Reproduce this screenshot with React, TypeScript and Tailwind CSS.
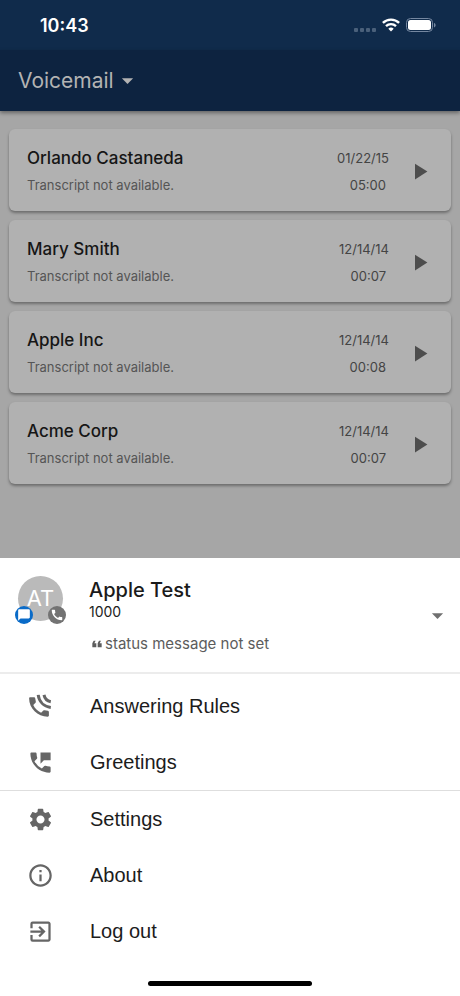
import type { ReactNode } from "react";
import {
  MdArrowDropDown,
  MdCall,
  MdChatBubble,
  MdExitToApp,
  MdFormatQuote,
  MdInfoOutline,
  MdPermPhoneMsg,
  MdPlayArrow,
  MdSettings,
} from "react-icons/md";

type Voicemail = {
  name: string;
  date: string;
  duration: string;
};

const voicemails: Voicemail[] = [
  { name: "Orlando Castaneda", date: "01/22/15", duration: "05:00" },
  { name: "Mary Smith", date: "12/14/14", duration: "00:07" },
  { name: "Apple Inc", date: "12/14/14", duration: "00:08" },
  { name: "Acme Corp", date: "12/14/14", duration: "00:07" },
];

// handset with two waves in the top right corner
function AnsweringRulesIcon() {
  return (
    <svg viewBox="0 0 27 27" className="size-[27px]" fill="none" aria-hidden="true">
      <path
        fill="currentColor"
        d="M3.2 4.2H7c.6 0 1.100.5 1.200 1.100l.6 3.200c.1.500 0 .9-.3 1.200L6.300 12c1.500 3.300 4.400 6.200 7.800 7.700l2.300-2.200c.3-.3.7-.4 1.200-.3l3.200.6c.6.1 1.100.6 1.100 1.200v3.600c0 .6-.5 1.100-1.200 1.100C10.600 23.700 2.100 15.400 2.100 5.300c0-.6.5-1.100 1.100-1.100z"
      />
      <path
        stroke="currentColor"
        strokeWidth="3"
        d="M11.200 1.900c.8 6.600 5.500 11.600 12.600 12.500M17 1.900c.7 3.600 3.200 6.100 6.800 6.800"
      />
    </svg>
  );
}

function StatusBar() {
  return (
    <div className="flex h-[50px] items-center justify-between bg-[#102b4b] pl-10 pr-6 text-white">
      <span className="pt-0.5 text-lg font-semibold">10:43</span>
      <div className="flex items-center gap-1.5">
        <div className="flex gap-0.5 pt-2.5">
          {[0, 1, 2, 3].map((i) => (
            <span key={i} className="size-1 rounded-[1px] bg-[#4a607a]" />
          ))}
        </div>
        <svg viewBox="0 0 18 14" className="h-3.5 w-[18px]" aria-label="Wi-Fi">
          <g fill="none" stroke="currentColor" strokeWidth="2.4">
            <path d="M.9 4.9a11.6 11.6 0 0 1 16.2 0" />
            <path d="M4 8.1a7.2 7.2 0 0 1 10 0" />
          </g>
          <path fill="currentColor" d="M9 13.6 6.3 10.8a4 4 0 0 1 5.4 0z" />
        </svg>
        <svg viewBox="0 0 30 14" className="h-3.5 w-[30px]" aria-label="Battery">
          <rect x=".5" y=".5" width="26" height="13" rx="4" fill="none" stroke="#7587a0" />
          <rect x="2" y="2" width="23" height="10" rx="2.5" fill="currentColor" />
          <path d="M28 5v4.4c1-.4 1.6-1.200 1.600-2.200S29 5.400 28 5z" fill="#7587a0" />
        </svg>
      </div>
    </div>
  );
}

function VoicemailCard({ name, date, duration }: Voicemail) {
  return (
    <li className="flex h-[82px] items-center rounded-md bg-[#b1b1b1] px-[18px] pt-0.5 shadow-[0_2px_3px_rgba(0,0,0,0.35)]">
      <div className="flex-1">
        <h2 className="text-[17px] leading-7 font-medium text-[#161616]">{name}</h2>
        <p className="text-[13px] leading-[26px] text-[#555]">Transcript not available.</p>
      </div>
      <div className="mr-[17px] text-right text-[#444]">
        <p className="text-[13px] leading-7">{date}</p>
        <p className="pr-[3px] text-[13px] leading-[26px]">{duration}</p>
      </div>
      <button type="button" aria-label={`Play message from ${name}`} className="text-[#4d4d4d]">
        <MdPlayArrow className="size-[27px]" />
      </button>
    </li>
  );
}

function MenuItem({ icon, label }: { icon: ReactNode; label: string }) {
  return (
    <li>
      <button
        type="button"
        className="flex h-14 w-full items-center gap-9 pl-[27px] text-left text-[#666]"
      >
        {icon}
        <span className="font-['Liberation_Sans',sans-serif] text-xl text-[#1c1c1c]">{label}</span>
      </button>
    </li>
  );
}

function Profile() {
  return (
    <div className="flex px-[18px] pt-[18px] pb-[18px]">
      <div className="relative size-[45px] shrink-0">
        <div className="flex size-full items-center justify-center rounded-full bg-[#bababa] text-[22px] text-white">
          AT
        </div>
        <span className="absolute -bottom-[3px] -left-[3px] flex size-[18px] items-center justify-center rounded-full bg-[#0a6bc8] text-white">
          <MdChatBubble className="size-3.5" />
        </span>
        <span className="absolute -right-[3px] -bottom-[3px] flex size-[18px] items-center justify-center rounded-full bg-[#737373] text-white">
          <MdCall className="size-3.5" />
        </span>
      </div>
      <div className="ml-[26px] flex-1">
        <h2 className="text-xl leading-7 font-medium text-[#1a1a1a]">Apple Test</h2>
        <p className="text-sm leading-4 text-[#222]">1000</p>
        <p className="mt-3.5 flex items-center text-[15px] leading-5 text-[#5c5c5c]">
          <MdFormatQuote className="size-4 rotate-180" />
          status message not set
        </p>
      </div>
      <button type="button" aria-label="Switch account" className="-mr-[9px] self-center text-[#707070]">
        <MdArrowDropDown className="size-[27px]" />
      </button>
    </div>
  );
}

export default function App() {
  return (
    <div className="flex min-h-screen flex-col bg-[#a6a6a6] font-[Inter,sans-serif]">
      <StatusBar />
      <header className="flex h-[61px] items-center bg-[#0d2340] pl-[18px] text-[#b3b3b3] shadow-[0_2px_4px_rgba(0,0,0,0.4)]">
        <button type="button" className="flex items-center text-[21px]">
          Voicemail
          <MdArrowDropDown className="size-[27px]" />
        </button>
      </header>

      <main className="flex-1 px-[9px] pt-[18px]">
        <ul className="flex flex-col gap-[9px]">
          {voicemails.map((vm) => (
            <VoicemailCard key={vm.name} {...vm} />
          ))}
        </ul>
      </main>

      <section aria-label="Account menu" className="bg-white">
        <Profile />
        <ul className="border-t-2 border-[#ececec] pt-1">
          <MenuItem icon={<AnsweringRulesIcon />} label="Answering Rules" />
          <MenuItem icon={<MdPermPhoneMsg className="size-[27px]" />} label="Greetings" />
        </ul>
        <ul className="border-t border-[#dedede]">
          <MenuItem icon={<MdSettings className="size-[27px]" />} label="Settings" />
          <MenuItem icon={<MdInfoOutline className="size-[27px]" />} label="About" />
          <MenuItem icon={<MdExitToApp className="size-[27px]" />} label="Log out" />
        </ul>
        <div className="flex justify-center pt-[22px] pb-2.5">
          <div className="h-[5px] w-[164px] rounded-full bg-black" />
        </div>
      </section>
    </div>
  );
}
